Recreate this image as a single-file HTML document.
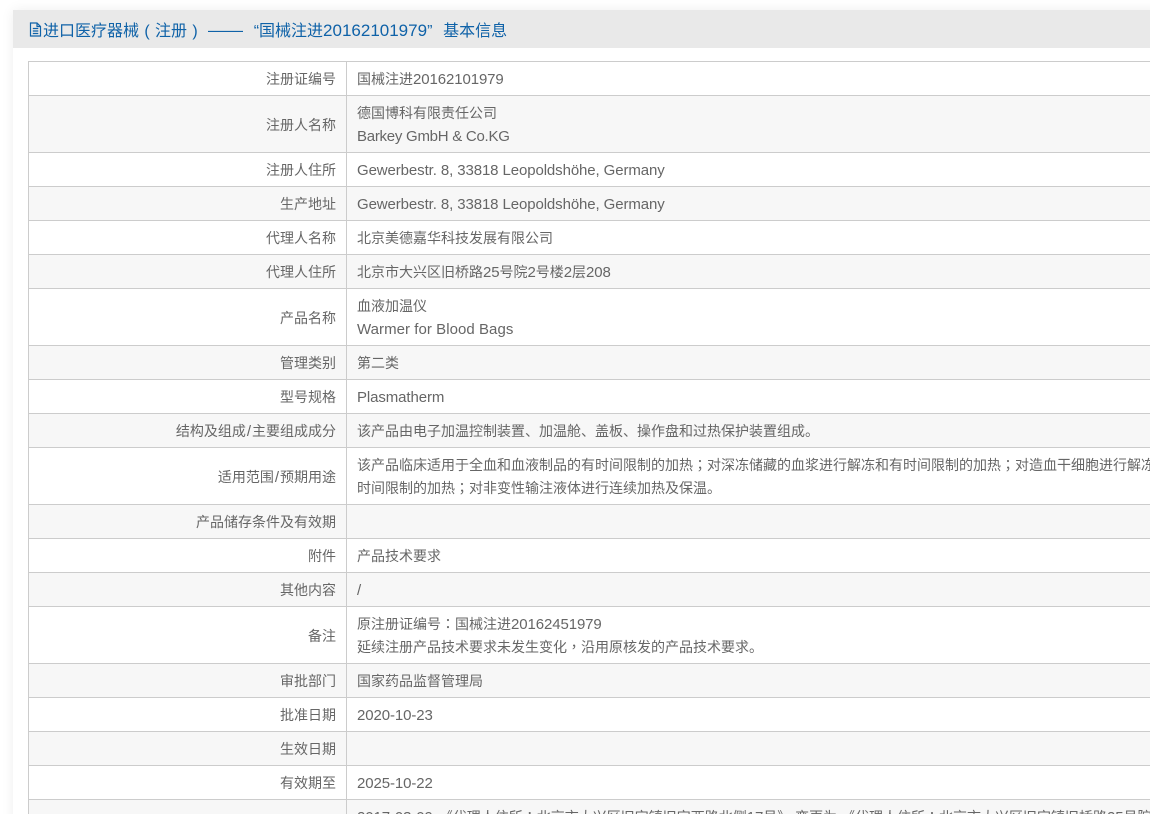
<!DOCTYPE html>
<html>
<head>
<meta charset="utf-8">
<title>进口医疗器械（注册）基本信息</title>
<style>
html,body{margin:0;padding:0;width:1150px;height:814px;overflow:hidden;background:#fff}
body{position:relative;font-family:"Liberation Sans","Noto Sans CJK SC",sans-serif;color:#666;font-size:14px}
.panel{position:absolute;left:13px;top:10px;width:1300px;height:900px;background:#fff;box-shadow:0 0 12px rgba(0,0,0,.07)}
.head{position:absolute;left:0;top:0;right:0;height:38px;background:#e9e9e9;color:#0f62a8;font-size:16px;line-height:44px;white-space:nowrap;overflow:hidden}
.head svg{position:absolute;left:16px;top:12px}
.head .t{position:absolute;left:30px;top:0}
.head .b{display:inline-block;width:16px;text-align:center;font-weight:normal;line-height:0}
.head .d{display:inline-block;width:35px;margin-left:5px;font-size:17.5px;line-height:0}
.head .q1{display:inline-block;width:16px;text-align:right;line-height:0}
.head .q2{display:inline-block;width:16px;text-align:left;line-height:0}
.head .n{font-size:17px;line-height:0}
table{position:absolute;left:15px;top:51px;width:1400px;border-collapse:collapse;table-layout:fixed}
td{border:1px solid #ccc;padding:6px 10px 4px;line-height:23px;white-space:nowrap;overflow:hidden;vertical-align:middle}
td:first-child{width:297px;text-align:right}
tr:nth-child(even) td{background:#f7f7f7}
.e{font-size:15px;letter-spacing:-.1px;line-height:0}
.s{font-size:15px;line-height:0;padding:0 1px}
</style>
</head>
<body>
<div class="panel">
  <div class="head">
    <svg width="14" height="15" viewBox="0 0 14 15" fill="none" stroke="#0f62a8" stroke-width="1.2"><path d="M1.500 1h6.500l3.500 3.500V14H1.500zM8 1v3.500h3.500M3.800 6.500h5.500M3.800 9h5.500M3.800 11.500h5.500"/></svg>
    <span class="t">进口医疗器械<span class="b">(</span>注册<span class="b">)</span><span class="d">——</span><span class="q1">“</span>国械注进<span class="n">20162101979</span><span class="q2">”</span>基本信息</span>
  </div>
  <table>
    <tr><td>注册证编号</td><td>国械注进<span class="e">20162101979</span></td></tr>
    <tr><td>注册人名称</td><td>德国博科有限责任公司<br><span class="e" style="letter-spacing:-.26px">Barkey GmbH &amp; Co.KG</span></td></tr>
    <tr><td>注册人住所</td><td><span class="e">Gewerbestr. 8, 33818 Leopoldshöhe, Germany</span></td></tr>
    <tr><td>生产地址</td><td><span class="e">Gewerbestr. 8, 33818 Leopoldshöhe, Germany</span></td></tr>
    <tr><td>代理人名称</td><td>北京美德嘉华科技发展有限公司</td></tr>
    <tr><td>代理人住所</td><td>北京市大兴区旧桥路<span class="e">25</span>号院<span class="e">2</span>号楼<span class="e">2</span>层<span class="e">208</span></td></tr>
    <tr><td>产品名称</td><td>血液加温仪<br><span class="e" style="letter-spacing:.05px">Warmer for Blood Bags</span></td></tr>
    <tr><td>管理类别</td><td>第二类</td></tr>
    <tr><td>型号规格</td><td><span class="e">Plasmatherm</span></td></tr>
    <tr><td>结构及组成<span class="s">/</span>主要组成成分</td><td>该产品由电子加温控制装置、加温舱、盖板、操作盘和过热保护装置组成。</td></tr>
    <tr><td>适用范围<span class="s">/</span>预期用途</td><td>该产品临床适用于全血和血液制品的有时间限制的加热<span lang="zh-Hant">；</span>对深冻储藏的血浆进行解冻和有时间限制的加热<span lang="zh-Hant">；</span>对造血干细胞进行解冻和有<br>时间限制的加热<span lang="zh-Hant">；</span>对非变性输注液体进行连续加热及保温。</td></tr>
    <tr><td>产品储存条件及有效期</td><td>&nbsp;</td></tr>
    <tr><td>附件</td><td>产品技术要求</td></tr>
    <tr><td>其他内容</td><td><span class="s" style="padding:0">/</span></td></tr>
    <tr><td>备注</td><td>原注册证编号<span lang="zh-Hant">：</span>国械注进<span class="e">20162451979</span><br>延续注册产品技术要求未发生变化<span lang="zh-Hant">，</span>沿用原核发的产品技术要求。</td></tr>
    <tr><td>审批部门</td><td>国家药品监督管理局</td></tr>
    <tr><td>批准日期</td><td><span class="e">2020-10-23</span></td></tr>
    <tr><td>生效日期</td><td>&nbsp;</td></tr>
    <tr><td>有效期至</td><td><span class="e">2025-10-22</span></td></tr>
    <tr><td>变更情况</td><td><span class="e" style="margin-right:6px">2017-03-09</span>《代理人住所<span lang="zh-Hant">：</span>北京市大兴区旧宫镇旧宫西路北侧<span class="e">17</span>号》 变更为 《代理人住所<span lang="zh-Hant">：</span>北京市大兴区旧宫镇旧桥路<span class="e">25</span>号院<span class="e">2</span>号楼<br>&nbsp;</td></tr>
  </table>
</div>
</body>
</html>
